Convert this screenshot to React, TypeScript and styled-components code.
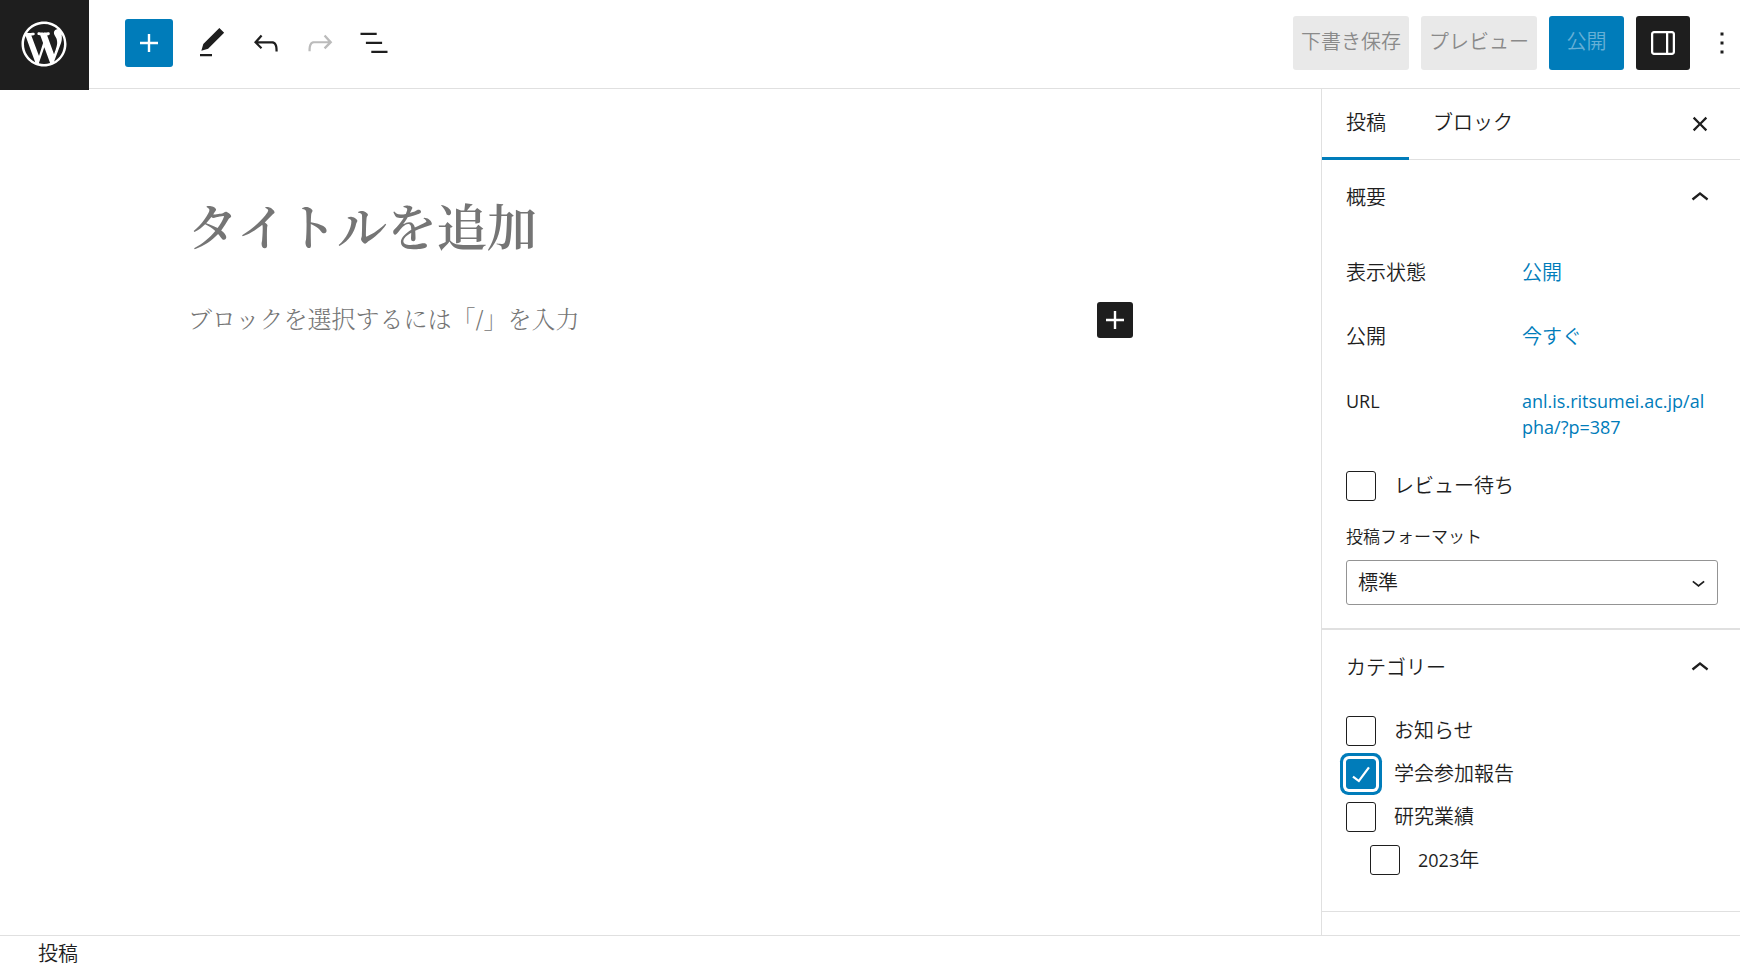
import React, { useState } from "react";
import styled, { createGlobalStyle } from "styled-components";

const color = {
  ink: "#1e1e1e",
  accent: "#007cba",
  line: "#e0e0e0",
  field: "#949494",
  placeholder: "#757575",
};

const sans = `"Open Sans", "Noto Sans CJK JP", sans-serif`;
const serif = `"Noto Serif CJK JP", "Noto Serif JP", "Noto Sans CJK JP", serif`;

const GlobalStyle = createGlobalStyle`
  *, *::before, *::after { box-sizing: border-box; }
  body {
    margin: 0;
    background: #fff;
    color: ${color.ink};
    font-family: ${sans};
    font-size: 20px;
    font-weight: 350;
    line-height: 26px;
  }
  button, input, select { font: inherit; color: inherit; }
  button { cursor: pointer; }
`;

const paths = {
  wordpress:
    "M20 10c0-5.51-4.49-10-10-10C4.48 0 0 4.49 0 10c0 5.52 4.48 10 10 10 5.51 0 10-4.48 10-10zM7.78 15.37L4.37 6.22c.55-.02 1.17-.08 1.17-.08.5-.06.44-1.13-.06-1.11 0 0-1.45.11-2.37.11-.18 0-.37 0-.58-.01C4.12 2.69 6.87 1.11 10 1.11c2.33 0 4.45.87 6.05 2.34-.68-.11-1.65.39-1.65 1.58 0 .74.45 1.36.9 2.1.35.61.55 1.36.55 2.46 0 1.49-1.4 5-1.4 5l-3.03-8.37c.54-.02.82-.17.82-.17.5-.05.44-1.25-.06-1.22 0 0-1.44.12-2.38.12-.87 0-2.33-.12-2.33-.12-.5-.03-.56 1.2-.06 1.22l.92.08 1.26 3.41zM17.41 10c.24-.64.74-1.87.43-4.25.7 1.29 1.05 2.71 1.05 4.25 0 3.29-1.73 6.24-4.4 7.78.97-2.59 1.94-5.2 2.92-7.78zM6.1 18.09C3.12 16.65 1.11 13.53 1.11 10c0-1.3.23-2.48.72-3.59C3.25 10.3 4.67 14.2 6.1 18.09zm4.03-6.63l2.58 6.98c-.86.29-1.76.45-2.71.45-.79 0-1.57-.11-2.29-.33.81-2.38 1.62-4.74 2.42-7.1z",
  plus: "M18 11.2h-5.2V6h-1.6v5.2H6v1.6h5.2V18h1.6v-5.2H18z",
  edit: "M20.1 5.1L16.9 2 6.2 12.7l-1.3 4.4 4.5-1.3L20.1 5.1zM4 20.8h8v-1.5H4v1.5z",
  undo: "M18.3 11.7c-.6-.6-1.4-.9-2.3-.9H6.7l2.9-3.3-1.1-1-4.5 5L8.5 16l1-1-2.7-2.7H16c.5 0 .9.2 1.3.5 1 1 1 3.4 1 4.5v.3h1.5v-.2c0-1.5 0-4.3-1.5-5.7z",
  redo: "M15.6 6.5l-1.1 1 2.9 3.3H8c-.9 0-1.7.3-2.3.9-1.4 1.5-1.4 4.2-1.4 5.6v.2h1.5v-.3c0-1.1 0-3.5 1-4.5.3-.3.7-.5 1.3-.5h9.2L14.5 15l1.1 1.1 4.6-4.6-4.6-5z",
  list: "M13.8 5.2H3v1.5h10.8V5.2zm-3.6 12v1.5H21v-1.5H10.2zm7.2-6H6.6v1.5h10.8v-1.5z",
  drawer:
    "M18 4H6c-1.1 0-2 .9-2 2v12c0 1.1.9 2 2 2h12c1.1 0 2-.9 2-2V6c0-1.1-.9-2-2-2zm-4 14.5H6c-.3 0-.5-.2-.5-.5V6c0-.3.2-.5.5-.5h8v13zm4.5-.5c0 .3-.2.5-.5.5h-2.5v-13H18c.3 0 .5.2.5.5v12z",
  more: "M13 19h-2v-2h2v2zm0-6h-2v-2h2v2zm0-6h-2V5h2v2z",
  close:
    "M12 13.06l3.712 3.713 1.061-1.06L13.061 12l3.712-3.712-1.06-1.06L12 10.938 8.288 7.227l-1.061 1.06L10.939 12l-3.712 3.712 1.06 1.061L12 13.061z",
  chevronUp: "M6.5 12.4L12 8l5.5 4.4-.9 1.2L12 10l-4.5 3.6-1-1.2z",
  chevronDown: "M17.5 11.6L12 16l-5.5-4.4.9-1.2L12 14l4.5-3.6 1 1.2z",
  check: "M16.7 7.1l-6.3 8.5-3.3-2.5-.9 1.2 4.5 3.4L17.9 8z",
};

const Svg = styled.svg`
  display: block;
  flex: none;
  fill: currentColor;
`;

function Icon({ name, size = 36, viewBox = "0 0 24 24" }: { name: keyof typeof paths; size?: number; viewBox?: string }) {
  return (
    <Svg width={size} height={size} viewBox={viewBox} aria-hidden="true">
      <path fillRule="evenodd" d={paths[name]} />
    </Svg>
  );
}

const Editor = styled.div`
  display: flex;
  flex-direction: column;
  min-height: 100vh;
`;

const Header = styled.header`
  display: flex;
  align-items: flex-start;
  height: 89px;
  border-bottom: 1px solid ${color.line};
`;

const HomeLink = styled.a`
  display: flex;
  align-items: center;
  justify-content: center;
  flex: none;
  width: 89px;
  height: 90px;
  padding: 0 1px 2px 0;
  background: ${color.ink};
  color: #fff;
`;

const Tools = styled.div`
  display: flex;
  align-items: center;
  height: 86px;
  padding-left: 36px;
`;

const Actions = styled.div`
  display: flex;
  align-items: center;
  gap: 12px;
  height: 86px;
  margin-left: auto;
`;

const IconButton = styled.button<{ $width?: number }>`
  display: flex;
  align-items: center;
  justify-content: center;
  width: ${(p) => p.$width ?? 54}px;
  height: 54px;
  padding: 0;
  border: 0;
  border-radius: 3px;
  background: none;
  color: ${color.ink};

  &:disabled { color: #bbb; }
  &[aria-pressed="true"] { background: ${color.ink}; color: #fff; }
`;

const MoreButton = styled(IconButton)`
  justify-content: flex-end;
`;

const InserterButton = styled(IconButton)<{ $size: number; $dark?: boolean }>`
  flex: none;
  width: ${(p) => p.$size}px;
  height: ${(p) => p.$size}px;
  background: ${(p) => (p.$dark ? color.ink : color.accent)};
  color: #fff;
`;

const ToolGroup = styled.div`
  display: flex;
  padding-left: 12px;
`;

const TextButton = styled.button<{ $primary?: boolean }>`
  height: 54px;
  min-width: 75px;
  padding: 0 ${(p) => (p.$primary ? 16 : 8)}px 2px;
  border: 0;
  border-radius: 3px;
  background: ${(p) => (p.$primary ? color.accent : "#e9e9e9")};
  color: ${(p) => (p.$primary ? "#66b0d6" : "#8a8a8a")};
  white-space: nowrap;
`;

const Body = styled.div`
  display: flex;
  flex: 1;
`;

const Canvas = styled.main`
  flex: 1;
  min-width: 0;
  padding: 95px 24px 0;
`;

const Column = styled.div`
  max-width: 945px;
  margin: 0 auto;
`;

const TitleInput = styled.input`
  display: block;
  width: 100%;
  height: 80px;
  padding: 0;
  border: 0;
  outline: 0;
  background: none;
  font-family: ${serif};
  font-size: 50px;
  font-weight: 600;

  &::placeholder { color: ${color.placeholder}; opacity: 1; }
`;

const BlockRow = styled.div`
  display: flex;
  align-items: center;
  margin-top: 36px;
`;

const BlockInput = styled.input`
  flex: 1;
  min-width: 0;
  height: 40px;
  padding: 0;
  border: 0;
  outline: 0;
  background: none;
  font-family: "DejaVu Sans", ${serif};
  font-size: 24px;

  &::placeholder { color: ${color.placeholder}; opacity: 1; }
`;

const Sidebar = styled.aside`
  flex: none;
  width: 419px;
  border-left: 1px solid ${color.line};
`;

const Tabs = styled.div`
  display: flex;
  height: 71px;
  padding-right: 22px;
  border-bottom: 1px solid ${color.line};
`;

const Tab = styled.button`
  height: 71px;
  padding: 0 23px 4px 24px;
  border: 0;
  background: none;

  &[aria-selected="true"] { box-shadow: inset 0 -3px ${color.accent}; }
`;

const CloseButton = styled(IconButton)`
  align-self: center;
  margin-left: auto;
`;

const Panel = styled.section<{ $divider: number }>`
  padding: 0 22px 0 24px;
  border-bottom: ${(p) => p.$divider}px solid ${color.line};
`;

const PanelHeading = styled.h2`
  margin: 0;
  font: inherit;
`;

const PanelToggle = styled.button`
  display: flex;
  align-items: center;
  justify-content: space-between;
  width: 100%;
  height: 72px;
  padding: 3px 0 0;
  border: 0;
  background: none;
  text-align: left;
`;

const Summary = styled.dl`
  display: grid;
  grid-template-columns: 176px 186px;
  row-gap: 38px;
  margin: 0;
  padding: 28px 0 31px;
`;

const Term = styled.dt``;

const Value = styled.dd`
  margin: 0;
`;

const ValueLink = styled.a`
  color: ${color.accent};
  text-decoration: none;
  word-break: break-all;
`;

const Latin = styled.span`
  font-size: 18px;
  font-weight: 400;
`;

const UrlLink = styled(ValueLink)`
  display: block;
  font-size: 18px;
  font-weight: 400;
`;

const CheckRow = styled.div<{ $nested?: boolean }>`
  display: flex;
  align-items: center;
  gap: 18px;
  height: 30px;
  padding-left: ${(p) => (p.$nested ? 24 : 0)}px;
`;

const CheckHolder = styled.span`
  display: grid;
  place-items: center;
  width: 30px;
  height: 30px;
  color: #fff;

  & > * { grid-area: 1 / 1; }
  & > svg { pointer-events: none; margin: -3px; }
`;

const CheckInput = styled.input`
  appearance: none;
  width: 30px;
  height: 30px;
  margin: 0;
  border: 1px solid ${color.ink};
  border-radius: 3px;
  background: #fff;

  &:checked {
    border-color: ${color.accent};
    background: ${color.accent};
    box-shadow: 0 0 0 3px #fff, 0 0 0 6px ${color.accent};
  }
`;

const FieldLabel = styled.label`
  display: block;
  margin-top: 23px;
  font-size: 17px;
`;

const SelectHolder = styled.div`
  display: grid;
  align-items: center;
  margin: 10px 0 23px;

  & > * { grid-area: 1 / 1; }
  & > svg { justify-self: end; margin-right: 6px; pointer-events: none; }
`;

const Select = styled.select`
  appearance: none;
  width: 100%;
  height: 45px;
  padding: 0 36px 0 11px;
  border: 1px solid ${color.field};
  border-radius: 3px;
  background: #fff;
`;

const CheckList = styled.div`
  display: flex;
  flex-direction: column;
  gap: 13px;
  padding: 14px 0 36px;
`;

const Footer = styled.footer`
  display: flex;
  align-items: center;
  height: 33px;
  padding: 3px 38px 0;
  border-top: 1px solid ${color.line};
`;

const Spacer = styled.div`
  height: 23px;
`;

function Check({
  id,
  label,
  nested,
  initial = false,
}: {
  id: string;
  label: React.ReactNode;
  nested?: boolean;
  initial?: boolean;
}) {
  const [checked, setChecked] = useState(initial);
  return (
    <CheckRow $nested={nested}>
      <CheckHolder>
        <CheckInput type="checkbox" id={id} checked={checked} onChange={(e) => setChecked(e.target.checked)} />
        {checked && <Icon name="check" />}
      </CheckHolder>
      <label htmlFor={id}>{label}</label>
    </CheckRow>
  );
}

function PanelTitle({ children }: { children: React.ReactNode }) {
  return (
    <PanelHeading>
      <PanelToggle type="button" aria-expanded="true">
        {children}
        <Icon name="chevronUp" />
      </PanelToggle>
    </PanelHeading>
  );
}

export default function App() {
  return (
    <Editor>
      <GlobalStyle />
      <Header>
        <HomeLink href="#" aria-label="投稿を表示">
          <Icon name="wordpress" size={54} viewBox="-2 -2 24 24" />
        </HomeLink>
        <Tools>
          <InserterButton type="button" $size={48} aria-label="ブロック挿入ツール">
            <Icon name="plus" />
          </InserterButton>
          <ToolGroup>
            <IconButton type="button" aria-label="ツール"><Icon name="edit" /></IconButton>
            <IconButton type="button" aria-label="元に戻す"><Icon name="undo" /></IconButton>
            <IconButton type="button" aria-label="やり直す" disabled><Icon name="redo" /></IconButton>
            <IconButton type="button" aria-label="リスト表示"><Icon name="list" /></IconButton>
          </ToolGroup>
        </Tools>
        <Actions>
          <TextButton type="button">下書き保存</TextButton>
          <TextButton type="button">プレビュー</TextButton>
          <TextButton type="button" $primary>公開</TextButton>
          <IconButton type="button" aria-label="設定" aria-pressed="true"><Icon name="drawer" /></IconButton>
          <MoreButton type="button" aria-label="オプション" $width={38}><Icon name="more" /></MoreButton>
        </Actions>
      </Header>

      <Body>
        <Canvas>
          <Column>
            <TitleInput type="text" aria-label="タイトルを追加" placeholder="タイトルを追加" />
            <BlockRow>
              <BlockInput type="text" aria-label="ブロック" placeholder="ブロックを選択するには「/」を入力" />
              <InserterButton type="button" $size={36} $dark aria-label="ブロックを追加">
                <Icon name="plus" />
              </InserterButton>
            </BlockRow>
          </Column>
        </Canvas>

        <Sidebar>
          <Tabs role="tablist">
            <Tab type="button" role="tab" aria-selected="true">投稿</Tab>
            <Tab type="button" role="tab" aria-selected="false">ブロック</Tab>
            <CloseButton type="button" aria-label="設定を閉じる" $width={36}><Icon name="close" /></CloseButton>
          </Tabs>

          <Panel $divider={2}>
            <PanelTitle>概要</PanelTitle>
            <Summary>
              <Term>表示状態</Term>
              <Value><ValueLink href="#">公開</ValueLink></Value>
              <Term>公開</Term>
              <Value><ValueLink href="#">今すぐ</ValueLink></Value>
              <Term><Latin>URL</Latin></Term>
              <Value><UrlLink href="#">anl.is.ritsumei.ac.jp/alpha/?p=387</UrlLink></Value>
            </Summary>
            <Check id="pending" label="レビュー待ち" />
            <FieldLabel htmlFor="format">投稿フォーマット</FieldLabel>
            <SelectHolder>
              <Select id="format" defaultValue="standard">
                <option value="standard">標準</option>
              </Select>
              <Icon name="chevronDown" size={27} />
            </SelectHolder>
          </Panel>

          <Panel $divider={1}>
            <PanelTitle>カテゴリー</PanelTitle>
            <CheckList>
              <Check id="news" label="お知らせ" />
              <Check id="conference" label="学会参加報告" initial />
              <Check id="research" label="研究業績" />
              <Check id="y2023" label={<><Latin>2023</Latin>年</>} nested />
            </CheckList>
          </Panel>
          <Spacer />
        </Sidebar>
      </Body>

      <Footer>投稿</Footer>
    </Editor>
  );
}
